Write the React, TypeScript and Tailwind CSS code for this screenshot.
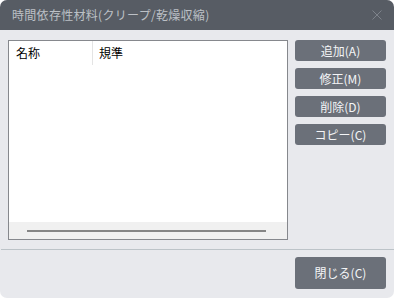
import React from "react";

const font = { fontFamily: '"Noto Sans CJK JP", "Noto Sans", sans-serif' };

function Btn({ label }: { label: string }) {
  return (
    <div className="w-[91px] h-[21px] rounded-[3px] bg-[#6b7079] text-[#f4f5f7] text-[12px] leading-[21px] text-center">
      {label}
    </div>
  );
}

export default function App() {
  return (
    <div className="w-[394px] h-[298px] bg-white" style={font}>
      <div className="w-[394px] h-[298px] rounded-[7px] overflow-hidden bg-[#e8e9ed] flex flex-col">
        <div className="h-[30px] bg-[#575c64] flex items-center justify-between pl-[12px] pr-[10px] shrink-0">
          <span className="text-[12px] tracking-[0.3px] text-[#bcc0c6] leading-none">時間依存性材料(クリープ/乾燥収縮)</span>
          <svg width="10" height="10" viewBox="0 0 10 10" className="mr-[2px]">
            <path d="M0.5 0.5 L9.5 9.5 M9.5 0.5 L0.5 9.5" stroke="#7d828a" strokeWidth="1" />
          </svg>
        </div>
        <div className="flex pt-[10px] pl-[8px] gap-[7px]">
          <div className="w-[280px] h-[200px] border border-[#86888d] bg-white flex flex-col">
            <div className="h-[24px] flex text-[12px] text-black">
              <div className="w-[84px] pl-[7px] h-[24px] leading-[23px] border-r border-[#e4e4e4]">名称</div>
              <div className="pl-[6px] leading-[23px]">規準</div>
            </div>
            <div className="flex-1" />
            <div className="h-[17px] bg-[#f0f0f0] flex items-center pl-[18px]">
              <div className="w-[239px] h-[2px] bg-[#858585]" />
            </div>
          </div>
          <div className="flex flex-col gap-[7px]">
            <Btn label="追加(A)" />
            <Btn label="修正(M)" />
            <Btn label="削除(D)" />
            <Btn label="コピー(C)" />
          </div>
        </div>
        <div className="h-px bg-[#bcc3c8] mt-[9px] ml-[1px]" />
        <div className="flex justify-end pr-[8px] pt-[7px]">
          <div className="w-[91px] h-[32px] rounded-[3px] bg-[#6b7079] text-[#f4f5f7] text-[12px] leading-[32px] text-center">
            閉じる(C)
          </div>
        </div>
      </div>
    </div>
  );
}
